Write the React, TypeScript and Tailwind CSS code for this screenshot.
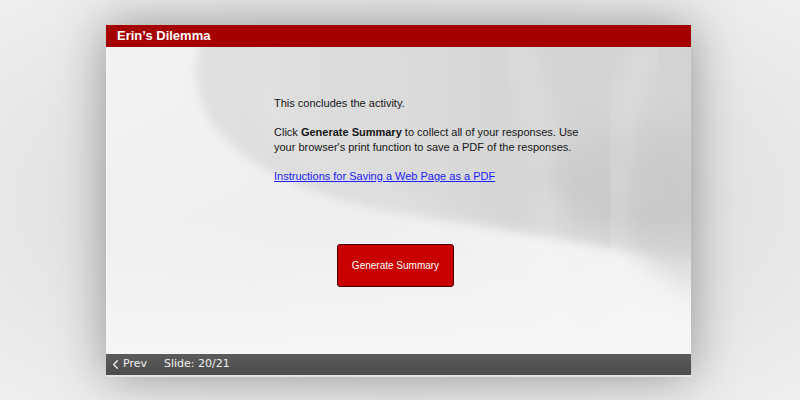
import React from "react";
import { ChevronLeft } from "lucide-react";

function Waves() {
  return (
    <svg
      className="absolute inset-0 h-full w-full"
      viewBox="0 0 585 307"
      preserveAspectRatio="none"
    >
      <defs>
        <linearGradient id="base" x1="0" y1="0" x2="1" y2="1">
          <stop offset="0" stopColor="#f3f3f3" />
          <stop offset="0.5" stopColor="#eeeeee" />
          <stop offset="1" stopColor="#f6f6f6" />
        </linearGradient>
        <linearGradient id="sweep" x1="0" y1="0" x2="1" y2="0">
          <stop offset="0" stopColor="#e0e0e0" />
          <stop offset="0.5" stopColor="#d9d9d9" />
          <stop offset="1" stopColor="#cdcdcd" />
        </linearGradient>
        <linearGradient id="dark" x1="0" y1="0" x2="0" y2="1">
          <stop offset="0" stopColor="#cdcdcd" />
          <stop offset="1" stopColor="#c4c4c4" />
        </linearGradient>
        <linearGradient id="fade" x1="0" y1="0" x2="0" y2="1">
          <stop offset="0" stopColor="#f4f4f4" stopOpacity="0" />
          <stop offset="1" stopColor="#f6f6f6" stopOpacity="1" />
        </linearGradient>
        <filter id="b4" x="-20%" y="-20%" width="140%" height="140%">
          <feGaussianBlur stdDeviation="5" />
        </filter>
        <filter id="b8" x="-20%" y="-20%" width="140%" height="140%">
          <feGaussianBlur stdDeviation="12" />
        </filter>
      </defs>
      <rect width="585" height="307" fill="url(#base)" />
      <path
        d="M95 -10 C70 70 130 135 290 165 C400 185 500 200 600 215 L600 -10 Z"
        fill="url(#sweep)"
        filter="url(#b4)"
      />
      <path
        d="M430 -10 C470 60 500 110 600 110 L600 -10 Z"
        fill="#d4d4d4"
        filter="url(#b8)"
      />
      <path
        d="M420 130 C470 100 530 70 600 70 L600 260 C560 230 520 200 480 170 Z"
        fill="url(#dark)"
        filter="url(#b8)"
        opacity="0.8"
      />
      <path
        d="M410 -10 C450 100 430 200 455 320"
        stroke="#ffffff"
        strokeOpacity="0.4"
        strokeWidth="10"
        fill="none"
        filter="url(#b8)"
      />
      <path
        d="M545 -10 C500 80 505 200 530 320"
        stroke="#ffffff"
        strokeOpacity="0.3"
        strokeWidth="14"
        fill="none"
        filter="url(#b8)"
      />
      <path
        d="M170 -10 C120 60 200 140 420 200"
        stroke="#ffffff"
        strokeOpacity="0.3"
        strokeWidth="8"
        fill="none"
        filter="url(#b8)"
      />
      <rect y="170" width="585" height="137" fill="url(#fade)" />
    </svg>
  );
}

export default function App() {
  return (
    <div className="h-[400px] w-[800px] overflow-hidden bg-[radial-gradient(ellipse_at_center,#d4d4d4_0%,#e4e4e4_60%,#efefef_100%)] pl-[106px] pt-[25px]">
      <div
        className="flex w-[585px] flex-col bg-[#dcdcdc] shadow-[0_0_45px_rgba(0,0,0,0.35)]"
        style={{ fontFamily: '"Liberation Sans", Arial, sans-serif' }}
      >
        <div className="flex h-[22px] items-center bg-[#a50000] pl-[11px] text-[13px] font-bold text-white">
          Erin’s Dilemma
        </div>
        <div className="relative h-[307px] border-l border-[#f6f6f6]">
          <Waves />
          <div className="relative flex flex-col pt-[49px]">
            <div className="ml-[167px] w-[320px] text-[11px] leading-[15px] text-[#161616]">
              <p>This concludes the activity.</p>
              <p className="mt-[14px]">
                Click <b>Generate Summary</b> to collect all of your responses. Use
                your browser's print function to save a PDF of the responses.
              </p>
              <p className="mt-[14px]">
                <a href="#" className="text-[#2020ff] underline">
                  Instructions for Saving a Web Page as a PDF
                </a>
              </p>
            </div>
            <div className="ml-[230px] mt-[60px]">
              <button className="flex h-[43px] w-[117px] items-center justify-center rounded-[3px] border border-[#4a0000] bg-[#c80000] text-[10px] text-white">
                Generate Summary
              </button>
            </div>
          </div>
        </div>
        <div
          className="flex h-[21px] items-center bg-[linear-gradient(#5b5b5b,#4c4c4c)] text-[11px] text-[#f0f0f0]"
          style={{ fontFamily: '"DejaVu Sans", Verdana, sans-serif' }}
        >
          <ChevronLeft className="ml-[2px] h-[15px] w-[15px]" strokeWidth={2} />
          <span className="ml-0">Prev</span>
          <span className="ml-[17px]">Slide: 20/21</span>
        </div>
        <div className="h-[2px] bg-[#e4e4e4]" />
      </div>
    </div>
  );
}
